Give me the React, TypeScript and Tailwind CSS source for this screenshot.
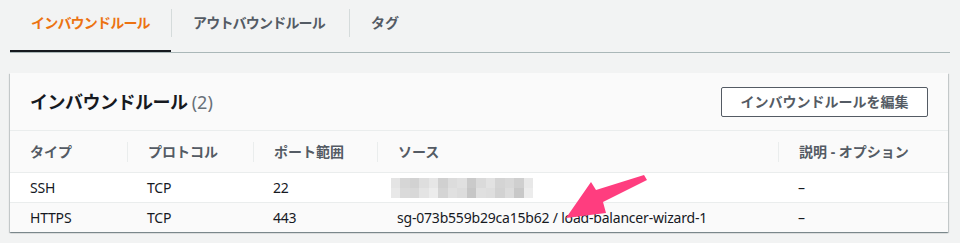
const font = { fontFamily: '"Noto Sans", "Noto Sans CJK JP", sans-serif' };

const mosaic = [
  ['#e4e4e4', '#d6d6d6', '#d2d2d2', '#dedede', '#e6e6e6', '#d0d0d0', '#dcdcdc', '#e0e0e0', '#cacaca', '#dadada', '#e2e2e2', '#d4d4d4', '#d8d8d8', '#cfcfcf', '#e8e8e8'],
  ['#e8e8e8', '#dadada', '#d8d8d8', '#e4e4e4', '#ececec', '#d4d4d4', '#e0e0e0', '#dcdcdc', '#c6c6c6', '#e0e0e0', '#dedede', '#d2d2d2', '#dcdcdc', '#c8c8c8', '#ececec'],
];

const cols = ['w-[117px]', 'w-[126px]', 'w-[124px]', 'w-[401px]', 'flex-1'];

function App() {
  const headers = ['タイプ', 'プロトコル', 'ポート範囲', 'ソース', '説明 - オプション'];

  return (
    <div className="min-h-screen w-[960px] h-[243px] bg-[#f2f3f3] text-[#16191f] relative overflow-hidden" style={font}>
      <div className="mx-[10px] flex border-b border-[#aab7b8] h-[53px]">
        <div className="w-[161px] pl-[21px] pt-[13px] h-[52px] border-b-2 border-[#16191f] text-[14px] leading-5 font-bold text-[#ec7211] tracking-[-0.8px]">
          インバウンドルール
        </div>
        <div className="w-px h-[28px] mt-[9px] bg-[#d5dbdb]" />
        <div className="w-[177px] pl-[21px] pt-[13px] text-[14px] leading-5 font-bold text-[#545b64] tracking-[-0.8px]">
          アウトバウンドルール
        </div>
        <div className="w-px h-[28px] mt-[9px] bg-[#d5dbdb]" />
        <div className="px-[21px] pt-[13px] text-[14px] leading-5 font-bold text-[#545b64]">タグ</div>
      </div>

      <div className="mx-[10px] mt-[20px] w-[938px] bg-[#fafafa] shadow-[0_1px_1px_0_rgba(0,28,36,0.3),1px_1px_1px_0_rgba(0,28,36,0.15),-1px_1px_1px_0_rgba(0,28,36,0.15)]">
        <div className="flex items-center justify-between h-[58px] px-5 border-b border-[#eaeded]">
          <div className="text-[18px] font-bold leading-6 tracking-[-0.5px]">
            インバウンドルール <span className="font-normal text-[#687078] tracking-normal">(2)</span>
          </div>
          <button className="h-[30px] w-[207px] border border-[#545b64] rounded-[2px] bg-white text-[14px] font-bold text-[#545b64] leading-5">
            インバウンドルールを編集
          </button>
        </div>

        <div className="flex h-[42px] items-center border-b border-[#eaeded] text-[14px] font-bold text-[#545b64]">
          {headers.map((h, i) => (
            <div key={h} className={`${cols[i]} flex items-center h-[20px] ${i > 0 ? 'border-l border-[#eaeded]' : ''} pl-5`}>
              {h}
            </div>
          ))}
        </div>

        <div className="flex h-[30px] items-center bg-white border-b border-[#eaeded] text-[14px] tracking-[-0.2px]">
          <div className={`${cols[0]} pl-5`}>SSH</div>
          <div className={`${cols[1]} pl-5`}>TCP</div>
          <div className={`${cols[2]} pl-5`}>22</div>
          <div className={`${cols[3]} pl-[14px]`}>
            <div className="flex flex-col w-[142px]">
              {mosaic.map((row, r) => (
                <div key={r} className="flex h-[10px]">
                  {row.map((c, j) => (
                    <div key={j} className="flex-1" style={{ backgroundColor: c }} />
                  ))}
                </div>
              ))}
            </div>
          </div>
          <div className={`${cols[4]} pl-5`}>–</div>
        </div>

        <div className="flex h-[29px] items-center text-[14px] tracking-[-0.2px]">
          <div className={`${cols[0]} pl-5`}>HTTPS</div>
          <div className={`${cols[1]} pl-5`}>TCP</div>
          <div className={`${cols[2]} pl-5`}>443</div>
          <div className={`${cols[3]} pl-5`}>sg-073b559b29ca15b62 / load-balancer-wizard-1</div>
          <div className={`${cols[4]} pl-5`}>–</div>
        </div>
      </div>

      <svg className="absolute left-0 top-0 pointer-events-none" width="960" height="243">
        <polygon
          points="644,175 647,180 603,202 606,213 566,218 591,182 596,190"
          fill="#ff3d7f"
        />
      </svg>
    </div>
  );
}

export default App;
